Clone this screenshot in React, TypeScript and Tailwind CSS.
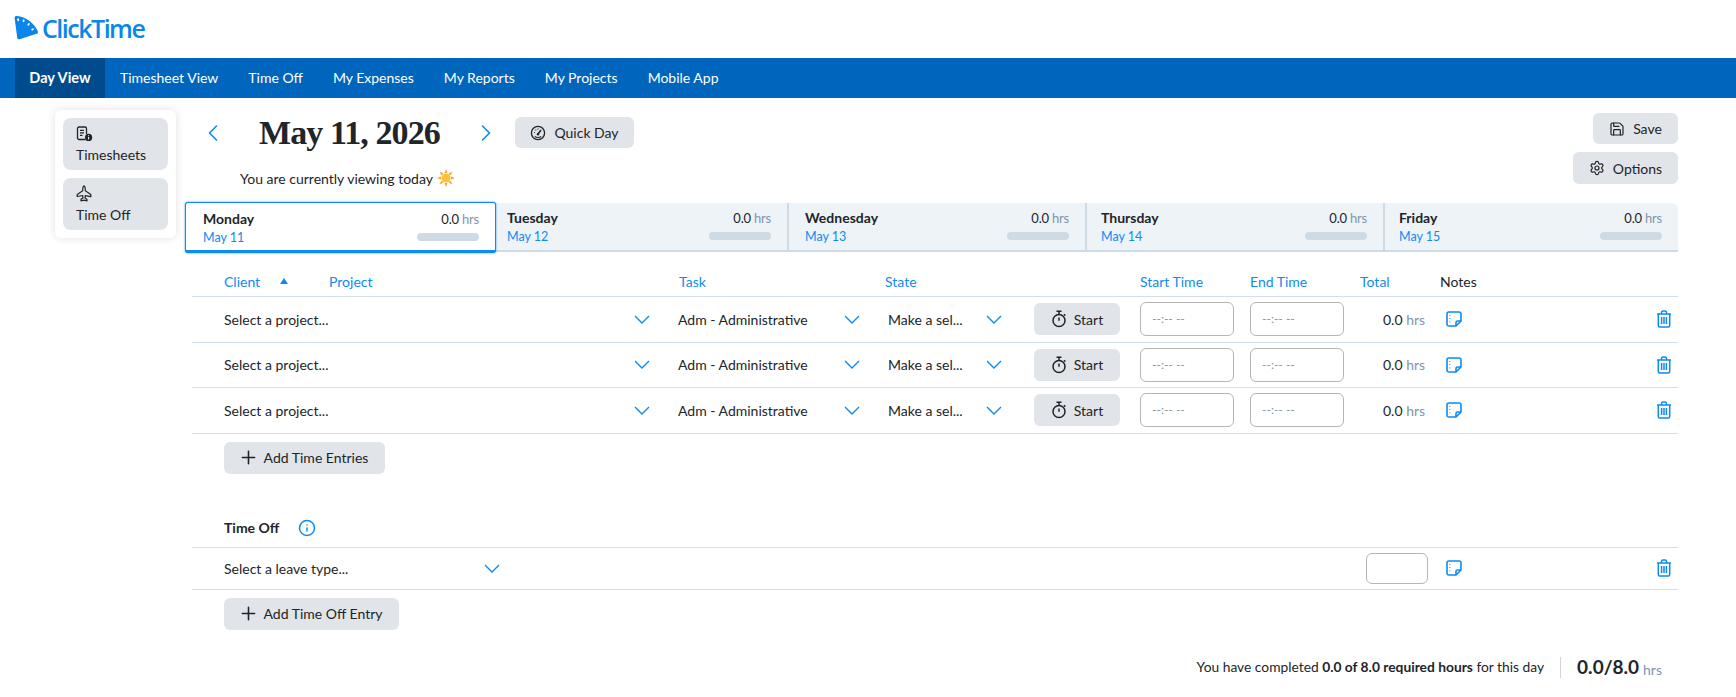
import React from "react";
import { ChevronLeft, ChevronRight, Info, Plus, Save, Settings } from "lucide-react";

const navItems = ["Timesheet View", "Time Off", "My Expenses", "My Reports", "My Projects", "Mobile App"];

const days = [
  { name: "Tuesday", date: "May 12", width: "w-[291px]", pad: "pl-[11px]" },
  { name: "Wednesday", date: "May 13", width: "w-[298px]", pad: "pl-[16px]" },
  { name: "Thursday", date: "May 14", width: "w-[298px]", pad: "pl-[14px]" },
  { name: "Friday", date: "May 15", width: "w-[295px]", pad: "pl-[14px]" },
];

function Logo() {
  return (
    <svg width="24" height="24" viewBox="0 0 23 23" className="shrink-0">
      <path
        d="M.6 2.200C.4.700 1.300 0 2.800.1 11.200.8 19.400 6.800 22.800 14.600c.4 1.200.1 2.100-1.200 2.500L5.400 22.200c-1.300.3-2.100-.1-2.300-1.400Z"
        fill="#0a86ea"
      />
      <g fill="#fff">
        <ellipse cx="4" cy="3.600" rx=".9" ry="1.400" transform="rotate(-15 4 3.600)" />
        <ellipse cx="9.200" cy="4.600" rx=".9" ry="1.400" transform="rotate(15 9.200 4.600)" />
        <ellipse cx="14" cy="8" rx=".9" ry="1.400" transform="rotate(40 14 8)" />
        <ellipse cx="17.800" cy="12.800" rx=".9" ry="1.400" transform="rotate(62 17.800 12.800)" />
      </g>
    </svg>
  );
}

function TimesheetIcon() {
  return (
    <svg width="17" height="16" viewBox="0 0 17 16" fill="none" stroke="#212529" strokeWidth="1.3">
      <path d="M9.500 13.500H3A1.500 1.500 0 0 1 1.500 12V2.500A1.500 1.500 0 0 1 3 1h6a1.500 1.500 0 0 1 1.500 1.500V8" />
      <path d="M4 4.300h4M4 6.800h4M4 9.300h2.500" />
      <circle cx="12.600" cy="11.400" r="3.600" fill="#212529" stroke="none" />
      <path d="M12.600 10.800v2.600M12.600 9.200v.7" stroke="#fff" strokeWidth="1" />
    </svg>
  );
}

function JetIcon() {
  return (
    <svg width="16" height="17" viewBox="0 0 16 17" fill="none" stroke="#212529" strokeWidth="1.2" strokeLinejoin="round">
      <path d="M8 .8c.9.8 1.300 2.200 1.300 3.700v1.300l5.500 3.700v2.200l-5.500-1-.3 2.300 2 1.500v1.500L8 15.200l-3 .6v-1.500l2-1.500-.3-2.300-5.500 1V9.500l5.500-3.700V4.500C6.700 3 7.100 1.600 8 .8Z" />
    </svg>
  );
}

function DialIcon() {
  return (
    <svg width="16" height="16" viewBox="0 0 16 16" fill="none" stroke="#212529" strokeWidth="1.3">
      <circle cx="8" cy="8" r="6.600" />
      <path d="M8 9l3-4" strokeWidth="1.500" />
      <circle cx="8" cy="9.300" r="1.200" fill="#212529" stroke="none" />
      <path d="M4 7.500h.9M5.500 4.700l.6.6M8 3.600v.8M4.800 11.500c2 1.200 4.400 1.200 6.400 0" strokeWidth="1.100" />
    </svg>
  );
}

function StopwatchIcon() {
  return (
    <svg width="16" height="18" viewBox="0 0 16 18" fill="none" stroke="#212529" strokeWidth="1.500">
      <circle cx="8" cy="10.500" r="6" />
      <path d="M5.500 1.200h5M8 1.200v3M8 7.500v3.300" />
      <path d="M13 4.300l1.300 1.300" />
    </svg>
  );
}

function NoteIcon() {
  return (
    <svg width="16" height="16" viewBox="0 0 16 16" fill="none" stroke="#0d8bf2" strokeWidth="1.600" strokeLinejoin="round">
      <path d="M2.800 1h10.400A1.800 1.800 0 0 1 15 2.800V10l-5 5H2.800A1.800 1.800 0 0 1 1 13.200V2.800A1.800 1.800 0 0 1 2.800 1Z" />
      <path d="M15 10h-3.500A1.500 1.500 0 0 0 10 11.500V15" />
      <path d="M3.800 4v.8M3.800 7.200V8M3.800 10.400v.8" strokeWidth="1.200" />
    </svg>
  );
}

function TrashIcon() {
  return (
    <svg width="16" height="18" viewBox="0 0 16 18" fill="none" stroke="#0d8bf2" strokeWidth="1.500" strokeLinejoin="round">
      <path d="M1 4h14M5.500 4V2.500A1.500 1.500 0 0 1 7 1h2a1.500 1.500 0 0 1 1.500 1.500V4" />
      <path d="M2.300 4v11.500A1.500 1.500 0 0 0 3.800 17h8.400a1.500 1.500 0 0 0 1.500-1.500V4" />
      <path d="M5.600 7v7M8 7v7M10.400 7v7" />
    </svg>
  );
}

function SunIcon() {
  return (
    <svg width="18" height="18" viewBox="0 0 18 18" className="shrink-0">
      <g fill="#f7a823">
        <path d="M9 0l1.500 4h-3zM9 18l-1.500-4h3zM0 9l4-1.500v3zM18 9l-4 1.500v-3zM2.600 2.600l3.900 1.800-2.100 2.100zM15.400 15.400l-3.900-1.800 2.100-2.100zM15.400 2.600l-1.800 3.900-2.100-2.100zM2.600 15.400l1.800-3.900 2.100 2.100z" />
      </g>
      <circle cx="9" cy="9" r="4.600" fill="#fbc13a" />
    </svg>
  );
}

function SelectChevron() {
  return (
    <svg width="16" height="9" viewBox="0 0 16 9" fill="none" stroke="#0d8bf2" strokeWidth="1.400" className="shrink-0">
      <path d="M1 1l7 7 7-7" />
    </svg>
  );
}

function Progress() {
  return <div className="h-2 w-[62px] rounded-full bg-[#cfdbe4]" />;
}

function Hours() {
  return (
    <div className="text-[13px] leading-5 tracking-[-0.2px] text-[#212529]">
      0.0 <span className="text-[#7f96ab]">hrs</span>
    </div>
  );
}

function GrayButton({ className, children }: { className: string; children: React.ReactNode }) {
  return (
    <button className={`flex items-center justify-center rounded-md bg-[#e1e4e8] text-[14px] text-[#212529] ${className}`}>
      {children}
    </button>
  );
}

function TimeInput() {
  return (
    <div className="flex h-[34px] w-[94px] items-center rounded-md border border-[#b5b5b5] pl-[11px] text-[12px] text-[#7f96ab]">
      --:-- --
    </div>
  );
}

function EntryRow() {
  return (
    <div className="grid h-[45.5px] grid-cols-[454px_210px_146px_106px_110px_110px_80px_1fr] items-center border-t border-[#d3e0e9] pl-8 text-[14px] text-[#212529]">
      <div className="flex items-center justify-between pr-[28px]">
        <span>Select a project...</span>
        <SelectChevron />
      </div>
      <div className="flex items-center justify-between pr-[28px]">
        <span>Adm - Administrative</span>
        <SelectChevron />
      </div>
      <div className="flex items-center justify-between pr-[32px]">
        <span>Make a sel...</span>
        <SelectChevron />
      </div>
      <GrayButton className="h-8 w-[86px] gap-[7px]">
        <StopwatchIcon />
        Start
      </GrayButton>
      <TimeInput />
      <TimeInput />
      <div className="pl-[23px]">
        0.0 <span className="text-[#7f96ab]">hrs</span>
      </div>
      <div className="flex items-center justify-between pl-[6px] pr-[6px]">
        <NoteIcon />
        <TrashIcon />
      </div>
    </div>
  );
}

export default function App() {
  return (
    <div className="min-h-[697px] bg-white font-['Lato',sans-serif] text-[#212529]">
      {/* Logo */}
      <div className="flex h-[58px] items-center gap-[4px] pb-[2px] pl-[14px]">
        <Logo />
        <span className="font-['Open_Sans',sans-serif] text-[25px] font-semibold leading-none tracking-[-1.5px] text-[#0a86ea]">
          ClickTime
        </span>
      </div>

      {/* Nav */}
      <nav className="flex h-10 bg-[#0066bd] pb-px pl-[15px] text-[14px] text-white">
        <a className="-mb-px flex w-[90px] items-center justify-center bg-[#004b8d] pb-px text-[14.5px] font-bold">Day View</a>
        {navItems.map((item) => (
          <a key={item} className="flex items-center px-[15px]">
            {item}
          </a>
        ))}
      </nav>

      <div className="flex items-start">
        {/* Sidebar */}
        <div className="ml-[55px] mt-3 flex w-[121px] shrink-0 flex-col gap-2 rounded-md bg-white p-2 shadow-[0_0_8px_rgba(0,0,0,0.12)]">
          <div className="flex h-[52px] flex-col justify-end rounded-lg bg-[#e1e4e8] pb-[5px] pl-[13px] text-[14px] leading-5">
            <TimesheetIcon />
            <span className="mt-[3px]">Timesheets</span>
          </div>
          <div className="flex h-[52px] flex-col justify-end rounded-lg bg-[#e1e4e8] pb-[5px] pl-[13px] text-[14px] leading-5">
            <JetIcon />
            <span className="mt-[3px]">Time Off</span>
          </div>
        </div>

        {/* Main */}
        <main className="ml-[9px] w-[1493px]">
          <div className="flex h-[105px] justify-between">
            <div className="pt-[19px]">
              <div className="flex h-[31px] items-center">
                <ChevronLeft size={28} strokeWidth={1.4} className="ml-[14px] text-[#0d8bf2]" />
                <h1 className="ml-[32px] w-[181px] whitespace-nowrap font-['Liberation_Serif',serif] text-[34px] font-bold leading-none tracking-[-0.9px]">
                  May 11, 2026
                </h1>
                <ChevronRight size={28} strokeWidth={1.4} className="ml-[32px] text-[#0d8bf2]" />
                <GrayButton className="ml-[15px] h-[31px] w-[119px] gap-2">
                  <DialIcon />
                  Quick Day
                </GrayButton>
              </div>
              <div className="ml-[55px] mt-5 flex h-5 items-center gap-1 text-[14px]">
                You are currently viewing today
                <SunIcon />
              </div>
            </div>
            <div className="flex flex-col items-end gap-2 pt-[15px]">
              <GrayButton className="h-[31px] w-[85px] gap-2">
                <Save size={16} strokeWidth={1.8} />
                Save
              </GrayButton>
              <GrayButton className="h-8 w-[105px] gap-2">
                <Settings size={16} strokeWidth={1.8} />
                Options
              </GrayButton>
            </div>
          </div>

          {/* Week strip */}
          <div className="flex h-[49px] rounded-t-md border-b-2 border-[#cfdbe4] bg-[#eef3f8]">
            <div className="z-10 -mt-px flex h-[51px] w-[311px] shrink-0 justify-between rounded-[3px] border border-b-[3px] border-[#0d8bf2] bg-white pl-[17px] pr-[16px] pt-[6px] shadow-[0_0_2px_#0d8bf2]">
              <div>
                <div className="text-[14px] font-bold leading-5">Monday</div>
                <div className="text-[12.5px] leading-[18px] text-[#0d8bf2]">May 11</div>
              </div>
              <div className="flex flex-col items-end">
                <Hours />
                <div className="mt-[4px]">
                  <Progress />
                </div>
              </div>
            </div>
            {days.map((day, i) => (
              <div
                key={day.name}
                className={`flex shrink-0 justify-between pr-[16px] pt-[5px] ${day.width} ${day.pad} ${i > 0 ? "border-l-2 border-[#cfdbe4]" : ""}`}
              >
                <div>
                  <div className="text-[14px] font-bold leading-5">{day.name}</div>
                  <div className="text-[12.5px] leading-[18px] text-[#0d8bf2]">{day.date}</div>
                </div>
                <div className="flex flex-col items-end">
                  <Hours />
                  <div className="mt-[4px]">
                    <Progress />
                  </div>
                </div>
              </div>
            ))}
          </div>

          <div className="pl-[7px]">
            {/* Table header */}
            <div className="grid h-[44px] grid-cols-[454px_210px_146px_106px_110px_110px_80px_1fr] items-center pl-8 pt-[14px] text-[14px] text-[#0d8bf2]">
              <div className="flex items-center">
                <span className="w-[56px]">Client</span>
                <span className="h-0 w-0 border-x-[4px] border-b-[6px] border-x-transparent border-b-[#0d8bf2]" />
                <span className="ml-[41px]">Project</span>
              </div>
              <span className="pl-px">Task</span>
              <span className="-ml-[3px]">State</span>
              <span />
              <span>Start Time</span>
              <span>End Time</span>
              <span>Total</span>
              <span className="text-[#212529]">Notes</span>
            </div>

            <EntryRow />
            <EntryRow />
            <EntryRow />

            <div className="border-t border-[#d3e0e9] pl-8 pt-2">
              <GrayButton className="h-8 w-[161px] gap-[5px] pr-[3px]">
                <Plus size={21} strokeWidth={1.8} />
                Add Time Entries
              </GrayButton>
            </div>

            {/* Time off */}
            <div className="mt-[35px] flex h-[38px] items-center gap-[19px] pl-8 text-[14px] font-bold">
              Time Off
              <Info size={18} strokeWidth={2} className="text-[#0d8bf2]" />
            </div>
            <div className="grid h-[43px] grid-cols-[276px_866px_62px_1fr] items-center border-y border-[#d3e0e9] pl-8 text-[14px]">
              <div className="flex items-center justify-between">
                <span>Select a leave type...</span>
                <SelectChevron />
              </div>
              <span />
              <div className="h-[31px] rounded-md border border-[#b5b5b5]" />
              <div className="flex items-center justify-between pl-[18px] pr-[6px]">
                <NoteIcon />
                <TrashIcon />
              </div>
            </div>
            <div className="pl-8 pt-2">
              <GrayButton className="h-8 w-[175px] gap-[5px] pr-[3px]">
                <Plus size={21} strokeWidth={1.8} />
                Add Time Off Entry
              </GrayButton>
            </div>

            {/* Footer */}
            <div className="mt-[27px] flex h-[21px] items-center justify-end pr-4 text-[13.8px]">
              <span>
                You have completed <b>0.0 of 8.0 required hours</b> for this day
              </span>
              <span className="mx-4 h-[21px] w-px bg-[#cfd6dc]" />
              <span className="text-[19px] font-bold">0.0/8.0</span>
              <span className="ml-1 mt-1 text-[14px] text-[#7f96ab]">hrs</span>
            </div>
          </div>
        </main>
      </div>
    </div>
  );
}
